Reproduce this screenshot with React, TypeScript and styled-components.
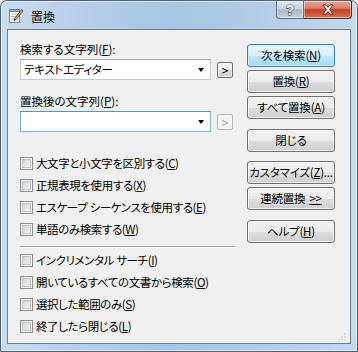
import React from "react"
import styled, { createGlobalStyle } from "styled-components"

const FONT = `"Noto Sans CJK JP", "Noto Sans", sans-serif`

const GlobalStyle = createGlobalStyle`
  html, body {
    margin: 0;
    padding: 0;
    background: #ffffff;
  }
  body {
    font-family: ${FONT};
    font-size: 11.5px;
    color: #000000;
    font-feature-settings: "palt";
  }
`

const Window = styled.div`
  width: 358px;
  height: 352px;
  box-sizing: border-box;
  border: 1px solid #4e6073;
  border-radius: 7px 7px 0 0;
  background: linear-gradient(
    to right,
    #c9dcef 0%,
    #b7cfe8 22%,
    #a8c5e3 48%,
    #b3cce6 72%,
    #c4d9ee 100%
  );
  box-shadow: inset 0 0 0 1px rgba(255, 255, 255, 0.55);
  display: flex;
  flex-direction: column;
  overflow: hidden;
`

const TitleBar = styled.div`
  height: 28px;
  flex: none;
  display: flex;
  align-items: flex-start;
  padding: 0 5px 0 7px;
`

const TitleIcon = styled.svg`
  margin-top: 7px;
  flex: none;
`

const TitleText = styled.span`
  margin: 8px 0 0 7px;
  line-height: 15px;
  font-size: 12px;
  color: #101010;
`

const Spacer = styled.div`
  flex: 1;
`

const CaptionGroup = styled.div`
  display: flex;
`

const CaptionButton = styled.div<{ $close?: boolean }>`
  height: 18px;
  width: ${(p) => (p.$close ? "48px" : "28px")};
  box-sizing: border-box;
  display: flex;
  align-items: center;
  justify-content: center;
  border: 1px solid ${(p) => (p.$close ? "#5b2b24" : "#5f7083")};
  border-top: none;
  border-left: ${(p) => (p.$close ? "none" : undefined)};
  border-radius: ${(p) => (p.$close ? "0 0 4px 0" : "0 0 0 4px")};
  background: ${(p) =>
    p.$close
      ? "linear-gradient(to bottom, #e9a898 0%, #d97c68 42%, #c43e29 52%, #cf5a40 80%, #e07c5c 100%)"
      : "linear-gradient(to bottom, #dfe7ef 0%, #c4d1de 45%, #a9bacb 52%, #b5c5d4 80%, #cad7e3 100%)"};
  box-shadow: inset 0 0 0 1px rgba(255, 255, 255, 0.45);
`

const Body = styled.div`
  flex: 1;
  padding: 0 6px 7px;
  display: flex;
`

const Client = styled.div`
  flex: 1;
  position: relative;
  border: 1px solid #6a7e92;
  background: #f0f0f0;
  display: grid;
  grid-template-columns: 215px 88px;
  column-gap: 12px;
  padding-left: 12px;
  align-content: start;
`

const LeftColumn = styled.div`
  display: flex;
  flex-direction: column;
  padding-top: 12px;
`

const RightColumn = styled.div`
  display: flex;
  flex-direction: column;
  padding-top: 14px;
`

const FieldLabel = styled.div<{ $top?: number }>`
  line-height: 15px;
  height: 15px;
  margin-top: ${(p) => p.$top ?? 0}px;
  white-space: nowrap;
`

const ComboRow = styled.div`
  display: flex;
  align-items: center;
  gap: 6px;
  margin-top: 2px;
`

const Combo = styled.div<{ $hot?: boolean }>`
  width: 191px;
  height: 21px;
  box-sizing: border-box;
  background: #ffffff;
  border: 1px solid ${(p) => (p.$hot ? "#7eb4ea" : "#c5c9d0")};
  border-top-color: ${(p) => (p.$hot ? "#5c93bc" : "#abadb3")};
  display: flex;
  align-items: center;
  padding-left: 3px;
`

const ComboText = styled.span`
  flex: 1;
  line-height: 15px;
  white-space: nowrap;
  letter-spacing: -0.3px;
`

const ComboArrow = styled.span`
  width: 19px;
  display: flex;
  justify-content: center;

  &::before {
    content: "";
    border-left: 3.5px solid transparent;
    border-right: 3.5px solid transparent;
    border-top: 4px solid #000000;
  }
`

const ArrowButton = styled.div<{ $disabled?: boolean }>`
  width: 16px;
  height: 16px;
  box-sizing: border-box;
  border: 1px solid ${(p) => (p.$disabled ? "#b5b8bb" : "#707070")};
  border-radius: 2px;
  background: ${(p) =>
    p.$disabled
      ? "#f4f4f4"
      : "linear-gradient(to bottom, #f2f2f2 0%, #ebebeb 50%, #dddddd 51%, #cfcfcf 100%)"};
  color: ${(p) => (p.$disabled ? "#a3a3a3" : "#000000")};
  font-size: 12px;
  line-height: 13px;
  text-align: center;
  box-shadow: inset 0 0 0 1px rgba(255, 255, 255, 0.6);
`

const CheckList = styled.div<{ $top: number }>`
  display: flex;
  flex-direction: column;
  margin-top: ${(p) => p.$top}px;
`

const CheckRow = styled.label`
  height: 22px;
  display: flex;
  align-items: center;
  gap: 3px;
  white-space: nowrap;
  line-height: 15px;
  letter-spacing: -0.4px;
`

const CheckBox = styled.span`
  width: 13px;
  height: 13px;
  box-sizing: border-box;
  flex: none;
  border: 1px solid #8e8f8f;
  background: linear-gradient(135deg, #cbcfd3 0%, #e4e6e8 55%, #f6f6f6 100%);
  box-shadow: inset 0 0 0 1px #f4f4f4, inset 0 0 0 2px #c2c6ca;
`

const Separator = styled.div`
  height: 1px;
  background: #a0a0a0;
  margin: 6px 0 2px;
  box-shadow: 0 1px 0 #ffffff;
`

const Button = styled.div<{ $top?: number; $default?: boolean }>`
  height: 23px;
  box-sizing: border-box;
  margin-top: ${(p) => p.$top ?? 0}px;
  border: 1px solid ${(p) => (p.$default ? "#3c7fb1" : "#707070")};
  border-radius: 3px;
  background: ${(p) =>
    p.$default
      ? "linear-gradient(to bottom, #eaf6fd 0%, #d9f0fc 50%, #bee6fd 51%, #a7d9f5 100%)"
      : "linear-gradient(to bottom, #f2f2f2 0%, #ebebeb 50%, #dddddd 51%, #cfcfcf 100%)"};
  box-shadow: inset 0 0 0 1px
    ${(p) => (p.$default ? "rgba(200, 240, 255, 0.9)" : "rgba(255, 255, 255, 0.7)")};
  display: flex;
  align-items: center;
  justify-content: center;
  line-height: 15px;
  white-space: nowrap;
  letter-spacing: -0.2px;
`

const Key = styled.span<{ $gap?: number }>`
  text-decoration: underline;
  text-underline-offset: 1px;
  margin-left: ${(p) => p.$gap ?? 0}px;
`

const SizeGrip = styled.svg`
  position: absolute;
  right: 3px;
  bottom: 1px;
`

const NotepadIcon = () => (
  <TitleIcon width="16" height="16" viewBox="0 0 16 16">
    <rect x="1.5" y="2.5" width="10" height="12" fill="#ffffff" stroke="#6f86a4" />
    <rect x="1.5" y="1.5" width="10" height="2" fill="#8fb2dc" stroke="#5d7ea8" />
    <line x1="3" y1="6" x2="10" y2="6" stroke="#a9b6c6" />
    <line x1="3" y1="8.5" x2="10" y2="8.5" stroke="#a9b6c6" />
    <line x1="3" y1="11" x2="8" y2="11" stroke="#a9b6c6" />
    <path d="M13.5 1.5 L15 3 L8 11.5 L6.2 12.6 L6.8 10.6 Z" fill="#e7b94a" stroke="#3d3424" strokeWidth="0.8" />
    <path d="M6.2 12.6 L6.8 10.6 L7.6 11.4 Z" fill="#2a2a2a" />
  </TitleIcon>
)

const HelpGlyph = () => (
  <svg width="12" height="14" viewBox="0 0 12 14">
    <text
      x="6"
      y="12"
      textAnchor="middle"
      fontFamily={`"Liberation Sans", sans-serif`}
      fontWeight="bold"
      fontSize="14"
      fill="#ffffff"
      stroke="#3a4656"
      strokeWidth="1.1"
      paintOrder="stroke"
    >
      ?
    </text>
  </svg>
)

const CloseGlyph = () => (
  <svg width="14" height="11" viewBox="0 0 14 11">
    <path
      d="M2 1 L5 1 L7 3.4 L9 1 L12 1 L8.6 5.5 L12 10 L9 10 L7 7.6 L5 10 L2 10 L5.4 5.5 Z"
      fill="#ffffff"
      stroke="#4a1e17"
      strokeWidth="0.9"
      strokeLinejoin="round"
    />
  </svg>
)

const GripDots = () => (
  <SizeGrip width="9" height="9" viewBox="0 0 9 9">
    {[
      [7, 1],
      [7, 4],
      [4, 4],
      [7, 7],
      [4, 7],
      [1, 7],
    ].map(([x, y]) => (
      <g key={`${x}-${y}`}>
        <rect x={x + 0.5} y={y + 0.5} width="1" height="1" fill="#ffffff" />
        <rect x={x - 0.5} y={y - 0.5} width="1" height="1" fill="#a8a8a8" />
      </g>
    ))}
  </SizeGrip>
)

const topOptions: [string, string][] = [
  ["大文字と小文字を区別する", "C"],
  ["正規表現を使用する", "X"],
  ["エスケープ シーケンスを使用する", "E"],
  ["単語のみ検索する", "W"],
]

const bottomOptions: [string, string][] = [
  ["インクリメンタル サーチ", "I"],
  ["開いているすべての文書から検索", "O"],
  ["選択した範囲のみ", "S"],
  ["終了したら閉じる", "L"],
]

const Option = ({ text, mnemonic }: { text: string; mnemonic: string }) => (
  <CheckRow>
    <CheckBox />
    <span>
      {text}(<Key>{mnemonic}</Key>)
    </span>
  </CheckRow>
)

export default function App() {
  return (
    <>
      <GlobalStyle />
      <Window>
        <TitleBar>
          <NotepadIcon />
          <TitleText>置換</TitleText>
          <Spacer />
          <CaptionGroup>
            <CaptionButton>
              <HelpGlyph />
            </CaptionButton>
            <CaptionButton $close>
              <CloseGlyph />
            </CaptionButton>
          </CaptionGroup>
        </TitleBar>
        <Body>
          <Client>
            <LeftColumn>
              <FieldLabel>
                検索する文字列(<Key>F</Key>):
              </FieldLabel>
              <ComboRow>
                <Combo>
                  <ComboText>テキストエディター</ComboText>
                  <ComboArrow />
                </Combo>
                <ArrowButton>&gt;</ArrowButton>
              </ComboRow>
              <FieldLabel $top={14}>
                置換後の文字列(<Key>P</Key>):
              </FieldLabel>
              <ComboRow>
                <Combo $hot>
                  <ComboText />
                  <ComboArrow />
                </Combo>
                <ArrowButton $disabled>&gt;</ArrowButton>
              </ComboRow>
              <CheckList $top={20}>
                {topOptions.map(([t, k]) => (
                  <Option key={k} text={t} mnemonic={k} />
                ))}
              </CheckList>
              <Separator />
              <CheckList $top={0}>
                {bottomOptions.map(([t, k]) => (
                  <Option key={k} text={t} mnemonic={k} />
                ))}
              </CheckList>
            </LeftColumn>
            <RightColumn>
              <Button $default>
                次を検索(<Key>N</Key>)
              </Button>
              <Button $top={3}>
                置換(<Key>R</Key>)
              </Button>
              <Button $top={3}>
                すべて置換(<Key>A</Key>)
              </Button>
              <Button $top={10}>閉じる</Button>
              <Button $top={9}>
                カスタマイズ(<Key>Z</Key>)...
              </Button>
              <Button $top={3}>
                連続置換<Key $gap={4}>&gt;&gt;</Key>
              </Button>
              <Button $top={10}>
                ヘルプ(<Key>H</Key>)
              </Button>
            </RightColumn>
            <GripDots />
          </Client>
        </Body>
      </Window>
    </>
  )
}
